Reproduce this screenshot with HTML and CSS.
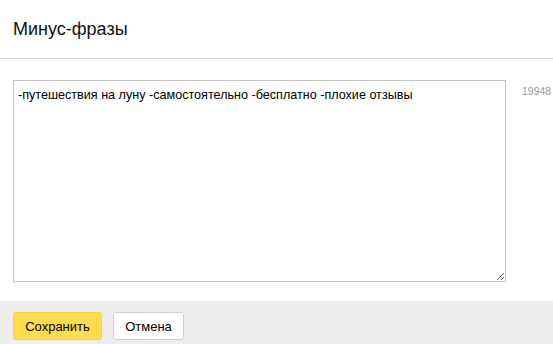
FILE: index.html
```html
<!DOCTYPE html>
<html>
<head>
	<meta charset="UTF-8">
	<title>Минус-фразы</title>
	<link rel="stylesheet" href="styles.css">
</head>
<body>
	<div class="dialog">
		<div class="dialog-head">Минус-фразы</div>
		<div class="dialog-body">
			<textarea class="phrases">-путешествия на луну -самостоятельно -бесплатно -плохие отзывы</textarea>
			<span class="counter">19948</span>
		</div>
		<div class="dialog-foot">
			<button class="btn btn-save">Сохранить</button>
			<button class="btn btn-cancel">Отмена</button>
		</div>
	</div>
</body>
</html>
```

FILE: styles.css
```css
body {
	margin: 0;
	font-family: Arial, 'Liberation Sans', sans-serif;
	background: #fff;
	color: #000;
}

.dialog {
	width: 553px;
	height: 344px;
	display: flex;
	flex-direction: column;
	overflow: hidden;
}

.dialog-head {
	height: 58px;
	padding-left: 13px;
	font-size: 18px;
	line-height: 58px;
	color: #111;
	border-bottom: 1px solid #dcdcdc;
}

.dialog-body {
	display: flex;
	align-items: flex-start;
	padding: 21px 0 0 13px;
	height: 242px;
	box-sizing: border-box;
}

.phrases {
	width: 493px;
	height: 202px;
	box-sizing: border-box;
	margin: 0;
	border: 1px solid #c4c4c4;
	padding: 6px 4px;
	font-family: Arial, 'Liberation Sans', sans-serif;
	font-size: 12.6px;
	line-height: 16px;
	color: #000;
	resize: both;
	outline: none;
}

.counter {
	margin: 5px 0 0 16px;
	font-size: 10.5px;
	color: #999;
}

.dialog-foot {
	flex: 1;
	display: flex;
	align-items: flex-start;
	gap: 11px;
	padding: 11px 13px 0;
	background: #ededed;
}

.btn {
	height: 28px;
	box-sizing: border-box;
	border-radius: 3px;
	font-family: Arial, 'Liberation Sans', sans-serif;
	font-size: 13px;
	color: #000;
	cursor: pointer;
}

.btn-save {
	width: 89px;
	background: #ffdb4d;
	border: 1px solid #f3d247;
}

.btn-cancel {
	width: 71px;
	background: #fff;
	border: 1px solid #cfcfcf;
}
```
